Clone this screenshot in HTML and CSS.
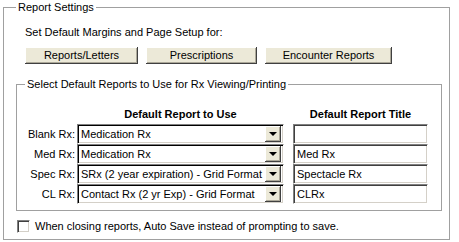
FILE: index.html
```html
<!DOCTYPE html>
<html lang="en">

<head>
    <meta charset="UTF-8">
    <title>Report Settings</title>
    <link rel="stylesheet" href="styles.css">
</head>

<body>
    <fieldset class="group outer">
        <legend>Report Settings</legend>
        <p class="intro">Set Default Margins and Page Setup for:</p>

        <div class="btn-row">
            <button class="btn btn-letters">Reports/Letters</button>
            <button class="btn btn-rx">Prescriptions</button>
            <button class="btn btn-enc">Encounter Reports</button>
        </div>

        <fieldset class="group inner">
            <legend>Select Default Reports to Use for Rx Viewing/Printing</legend>
            <div class="grid">
                <div></div>
                <div class="head">Default Report to Use</div>
                <div class="head">Default Report Title</div>

                <div class="lbl">Blank Rx:</div>
                <div class="combo"><span>Medication Rx</span><i class="drop"></i></div>
                <div class="field"></div>

                <div class="lbl">Med Rx:</div>
                <div class="combo"><span>Medication Rx</span><i class="drop"></i></div>
                <div class="field">Med Rx</div>

                <div class="lbl">Spec Rx:</div>
                <div class="combo"><span>SRx (2 year expiration) - Grid Format</span><i class="drop"></i></div>
                <div class="field">Spectacle Rx</div>

                <div class="lbl">CL Rx:</div>
                <div class="combo"><span>Contact Rx (2 yr Exp) - Grid Format</span><i class="drop"></i></div>
                <div class="field">CLRx</div>
            </div>
        </fieldset>

        <label class="check"><span class="box"></span>When closing reports, Auto Save instead of prompting to save.</label>
    </fieldset>
</body>

</html>
```

FILE: styles.css
```css
body {
    margin: 0;
    background-color: #fff;
    font-family: 'Liberation Sans', Arial, sans-serif;
    font-size: 11px;
    line-height: 13px;
    color: #000;
}
.group {
    margin: 0;
    border: 1px solid #a0a0a0; /* etched look */
    box-shadow: 1px 1px 0 #fff inset;
}
.group legend {
    padding: 0 2px;
}
.outer {
    width: 447px;
    height: 239px;
    box-sizing: border-box;
    margin: 1px 0 0 3px;
    padding: 12px 0 0 12px;
}
.intro {
    margin: 0 0 8px 9px;
}
.btn-row {
    display: flex;
    gap: 8px;
    margin-left: 9px;
}
.btn {
    height: 17px;
    padding: 0;
    font: inherit;
    color: #000;
    background-color: #ece9d8;
    border: none;
    box-shadow: inset -1px -1px 0 #404040, inset 1px 1px 0 #fff, inset -2px -2px 0 #aca899;
}
.btn-letters { width: 113px; }
.btn-rx { width: 111px; }
.btn-enc { width: 127px; }
.inner {
    width: 426px;
    box-sizing: border-box;
    margin: 14px 0 0 0;
    padding: 17px 0 6px 7px;
}
.inner legend {
    margin-left: 1px;
}
.grid {
    display: grid;
    grid-template-columns: 51px 209px 144px;
    column-gap: 0;
    row-gap: 0;
    align-items: center;
}
.grid .lbl {
    text-align: right;
}
.head {
    font-weight: bold;
    text-align: center;
    margin-bottom: 3px;
}
.grid .head:nth-child(2) {
    margin-left: 2px;
}
.grid .head:nth-child(3) {
    margin-left: 9px;
}
.combo {
    height: 20px;
    box-sizing: border-box;
    display: flex;
    align-items: center;
    justify-content: space-between;
    border-top: 1px solid #808080;
    border-left: 1px solid #808080;
    border-right: 1px solid #fff;
    border-bottom: 1px solid #fff;
    box-shadow: inset 1px 1px 0 #000, inset -1px -1px 0 #d4d0c8;
    padding: 0 2px 0 3px;
    margin-left: 2px;
    white-space: nowrap;
}
.combo span {
    overflow: hidden;
    flex: 1;
}
.drop {
    flex: none;
    width: 16px;
    height: 16px;
    box-sizing: border-box;
    background-color: #ece9d8;
    box-shadow: inset -1px -1px 0 #404040, inset 1px 1px 0 #fff, inset -2px -2px 0 #aca899;
    position: relative;
}
.drop::after {
    content: '';
    position: absolute;
    left: 4px;
    top: 6px;
    border-left: 4px solid transparent;
    border-right: 4px solid transparent;
    border-top: 4px solid #000;
}
.field {
    height: 20px;
    box-sizing: border-box;
    border-top: 1px solid #808080;
    border-left: 1px solid #808080;
    border-right: 1px solid #fff;
    border-bottom: 1px solid #fff;
    box-shadow: inset 1px 1px 0 #404040, inset -1px -1px 0 #d4d0c8;
    padding: 3px 3px 0;
    margin-left: 9px;
    white-space: nowrap;
}
.check {
    display: flex;
    align-items: center;
    gap: 5px;
    margin: 9px 0 0 1px;
}
.box {
    width: 13px;
    height: 13px;
    box-sizing: border-box;
    border-top: 1px solid #808080;
    border-left: 1px solid #808080;
    border-right: 1px solid #fff;
    border-bottom: 1px solid #fff;
    box-shadow: inset 1px 1px 0 #404040, inset -1px -1px 0 #d4d0c8;
    background-color: #fff;
}
```
